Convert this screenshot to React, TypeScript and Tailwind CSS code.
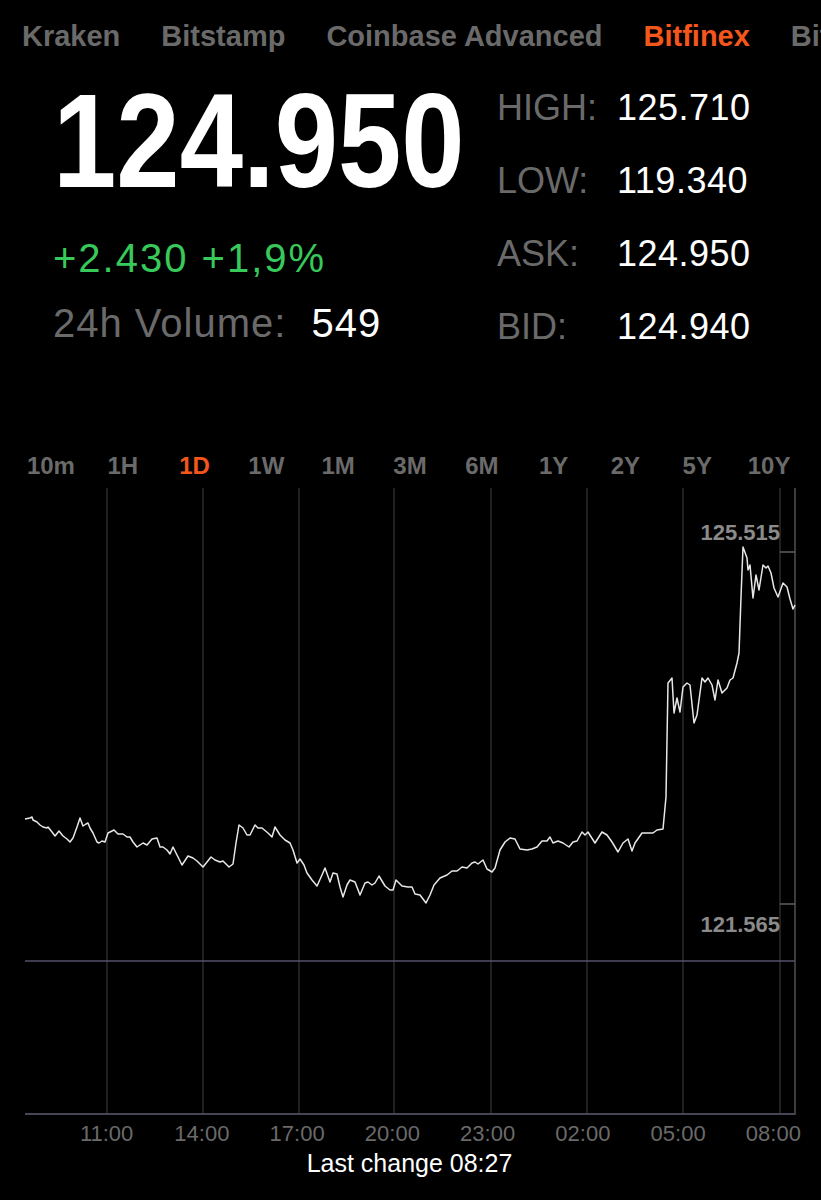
const exchanges = [
  { name: "Kraken" },
  { name: "Bitstamp" },
  { name: "Coinbase Advanced" },
  { name: "Bitfinex", active: true },
  { name: "Bitso" },
];

const ranges = ["10m", "1H", "1D", "1W", "1M", "3M", "6M", "1Y", "2Y", "5Y", "10Y"];
const times = ["11:00", "14:00", "17:00", "20:00", "23:00", "02:00", "05:00", "08:00"];
const gridX = [107, 203, 299, 394, 491, 587, 683, 780];

const stats = [
  ["HIGH:", "125.710"],
  ["LOW:", "119.340"],
  ["ASK:", "124.950"],
  ["BID:", "124.940"],
];

// traced price line, page coordinates
const line: [number, number][] = [
  [25, 819], [30, 818], [32, 817], [33, 820], [37, 822], [40, 825], [43, 827], [47, 828], [48, 827],
  [52, 832], [55, 836], [59, 831], [63, 836], [67, 839], [70, 842], [73, 838], [77, 827], [80, 818],
  [83, 826], [86, 824], [88, 823], [90, 828], [93, 833], [97, 842], [99, 843], [102, 841], [105, 842],
  [108, 833], [114, 830], [118, 834], [123, 834], [127, 837], [130, 837], [133, 842], [137, 847],
  [143, 843], [147, 845], [152, 839], [157, 838], [160, 847], [163, 847], [167, 850], [170, 854],
  [173, 847], [177, 855], [182, 865], [188, 856], [193, 858], [197, 861], [203, 867], [207, 862],
  [211, 857], [215, 860], [220, 862], [223, 861], [229, 867], [233, 864], [236, 843], [239, 825],
  [243, 828], [247, 835], [250, 835], [255, 825], [258, 828], [262, 828], [268, 833], [272, 837],
  [275, 827], [280, 835], [285, 840], [290, 843], [293, 850], [297, 863], [300, 859], [304, 865],
  [307, 873], [312, 880], [317, 886], [322, 875], [325, 868], [330, 882], [333, 873], [337, 874],
  [340, 887], [343, 897], [347, 885], [350, 880], [355, 882], [360, 895], [365, 883], [368, 882],
  [372, 885], [375, 883], [379, 876], [385, 886], [390, 890], [393, 890], [396, 880], [402, 886],
  [408, 887], [412, 887], [415, 894], [420, 895], [426, 903], [430, 895], [434, 885], [440, 878],
  [447, 875], [452, 871], [457, 871], [462, 867], [467, 868], [472, 863], [475, 862], [478, 864],
  [483, 860], [487, 869], [492, 872], [495, 868], [500, 850], [505, 842], [510, 838], [515, 839],
  [520, 849], [527, 850], [532, 849], [537, 847], [542, 841], [547, 841], [550, 837], [553, 843],
  [558, 841], [563, 843], [569, 847], [573, 842], [577, 841], [582, 832], [585, 835], [588, 832],
  [595, 843], [602, 832], [607, 835], [612, 842], [618, 852], [623, 843], [628, 839], [632, 851],
  [635, 843], [642, 833], [647, 833], [653, 833], [657, 830], [663, 829], [666, 797], [668, 683],
  [672, 678], [674, 713], [677, 698], [680, 712], [683, 687], [687, 683], [690, 685], [694, 723],
  [697, 715], [702, 678], [705, 682], [708, 678], [712, 685], [715, 700], [718, 680], [722, 693],
  [727, 688], [730, 680], [733, 678], [737, 663], [739, 653], [741, 597], [743, 547], [747, 558],
  [748, 570], [750, 565], [753, 598], [756, 575], [759, 590], [763, 565], [766, 568], [768, 566],
  [771, 573], [774, 588], [778, 597], [783, 583], [787, 587], [790, 599], [793, 609], [795, 605],
];

function Chart() {
  return (
    <svg className="block h-[628px] w-[821px]" viewBox="0 488 821 628">
      {gridX.map((x) => (
        <line key={x} x1={x} y1={488} x2={x} y2={1114} stroke="#2b2b2d" strokeWidth={1.5} />
      ))}
      <line x1={795} y1={488} x2={795} y2={1115} stroke="#505056" strokeWidth={1.5} />
      <line x1={780} y1={552} x2={795} y2={552} stroke="#5e5e64" strokeWidth={1.5} />
      <line x1={780} y1={904} x2={795} y2={904} stroke="#5e5e64" strokeWidth={1.5} />
      <line x1={25} y1={961} x2={795} y2={961} stroke="#52526a" strokeWidth={1.5} />
      <line x1={25} y1={1114} x2={795} y2={1114} stroke="#464656" strokeWidth={2} />
      <text x={780} y={540} textAnchor="end" fill="#8a8a8a" fontSize={22} fontWeight={700} fontFamily="Liberation Sans, Arial, sans-serif">
        125.515
      </text>
      <text x={780} y={932} textAnchor="end" fill="#8a8a8a" fontSize={22} fontWeight={700} fontFamily="Liberation Sans, Arial, sans-serif">
        121.565
      </text>
      <polyline
        points={line.map(([x, y]) => `${x},${y}`).join(" ")}
        fill="none"
        stroke="#e8e8e8"
        strokeWidth={1.5}
        strokeLinejoin="round"
      />
    </svg>
  );
}

export default function App() {
  return (
    <div className="h-[1200px] w-[821px] overflow-hidden bg-black font-['Liberation_Sans',Arial,sans-serif]">
      <div className="flex h-[74px] items-center gap-[41px] overflow-hidden whitespace-nowrap pl-[22px] text-[29px] font-bold">
        {exchanges.map((e) => (
          <span key={e.name} className={e.active ? "text-[#f4561c]" : "text-[#6a6a6a]"}>
            {e.name}
          </span>
        ))}
      </div>

      <div className="flex">
        <div className="w-[497px] pl-[53px]">
          <div className="h-[134px] text-[134px] leading-[134px] font-bold text-white">
            <span className="inline-block origin-left scale-x-[0.85]">124.950</span>
          </div>
          <div className="mt-[26px] text-[40px] leading-[48px] tracking-[2px] text-[#38c95b]">+2.430 +1,9%</div>
          <div className="mt-[17px] text-[40px] leading-[48px]">
            <span className="tracking-[1px] text-[#6a6a6a]">24h Volume:</span>
            <span className="ml-[25px] tracking-[1px] text-white">549</span>
          </div>
        </div>
        <div className="-mt-[3px] flex flex-col">
          {stats.map(([k, v]) => (
            <div key={k} className="flex h-[73px] text-[36px] leading-[73px]">
              <span className="w-[120px] text-[#6a6a6a]">{k}</span>
              <span className="tracking-[0.5px] text-white">{v}</span>
            </div>
          ))}
        </div>
      </div>

      <div className="mt-[83px] grid h-[40px] grid-cols-11 items-center pl-[15px] pr-[16px] text-[24px] font-bold">
        {ranges.map((r) => (
          <span key={r} className={"text-center " + (r === "1D" ? "text-[#f4561c]" : "text-[#6a6a6a]")}>
            {r}
          </span>
        ))}
      </div>

      <div className="mt-[2px]">
        <Chart />
      </div>

      <div className="flex h-[34px] items-center pl-[59px] text-[22px] text-[#6a6a6a]">
        {times.map((t) => (
          <span key={t} className="w-[96px] text-center">
            {t}
          </span>
        ))}
      </div>
      <div className="flex h-[28px] items-center justify-center pr-[2px] text-[25px] text-white">Last change 08:27</div>
    </div>
  );
}
